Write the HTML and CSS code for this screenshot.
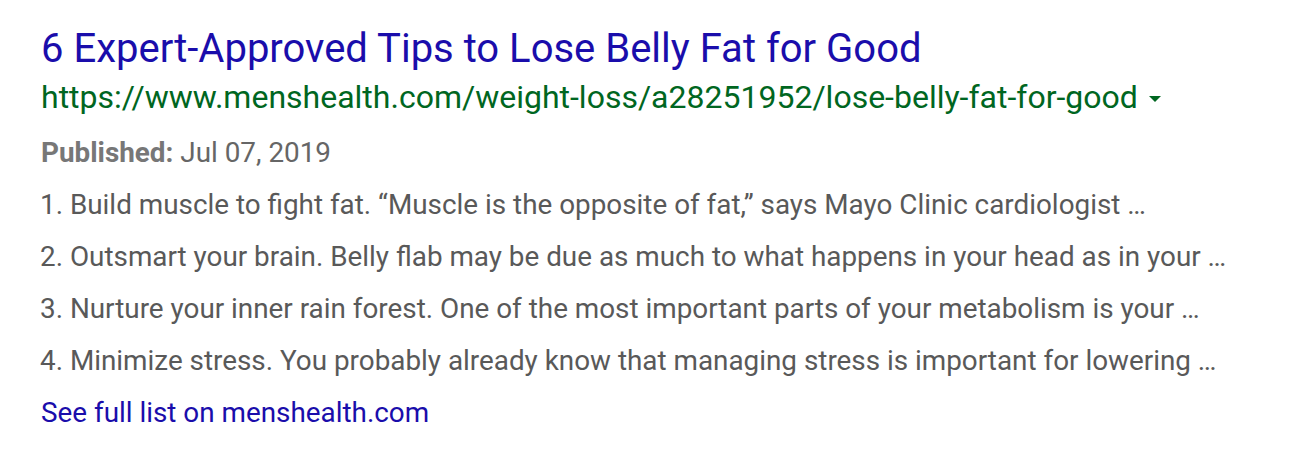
FILE: index.html
```html
<!DOCTYPE html>
<html>
<head>
<meta charset="utf-8">
<link rel="stylesheet" href="styles.css">
</head>
<body>
<div class="result">
  <a class="title" href="#">6 Expert-Approved Tips to Lose Belly Fat for Good</a>
  <div class="url">https://www.menshealth.com/weight-loss/a28251952/lose-belly-fat-for-good<span class="arrow"></span></div>
  <div class="date"><span class="label">Published:</span> Jul 07, 2019</div>
  <ol class="list">
    <li>1. Build muscle to fight fat. “Muscle is the opposite of fat,” says Mayo Clinic cardiologist …</li>
    <li>2. Outsmart your brain. Belly flab may be due as much to what happens in your head as in your …</li>
    <li>3. Nurture your inner rain forest. One of the most important parts of your metabolism is your …</li>
    <li>4. Minimize stress. You probably already know that managing stress is important for lowering …</li>
  </ol>
  <a class="more" href="#">See full list on menshealth.com</a>
</div>
</body>
</html>
```
FILE: styles.css
```css
html, body {
  margin: 0;
  padding: 0;
  background: #fff;
}
body {
  font-family: Roboto, "Liberation Sans", Arial, sans-serif;
}
.result {
  display: flex;
  flex-direction: column;
  align-items: flex-start;
  padding: 25px 0 0 41px;
}
.title {
  font-size: 40px;
  line-height: 48px;
  color: #1a0dab;
  text-decoration: none;
}
.url {
  margin-top: 4px;
  font-size: 32px;
  line-height: 40px;
  color: #006621;
  display: flex;
  align-items: center;
}
.arrow {
  width: 0;
  height: 0;
  margin-left: 11px;
  margin-top: 4px;
  border-left: 6px solid transparent;
  border-right: 6px solid transparent;
  border-top: 6px solid #006621;
}
.date {
  margin-top: 10px;
  font-size: 27.85px;
  line-height: 52px;
  color: #666;
}
.label {
  font-weight: bold;
  color: #777;
}
.list {
  list-style: none;
  margin: 0 0 0 -1px;
  padding: 0;
  font-size: 27.85px;
  line-height: 52px;
  color: #595959;
}
.list li {
  white-space: nowrap;
}
.more {
  font-size: 27.85px;
  line-height: 52px;
  color: #1a0dab;
  text-decoration: none;
}
```
